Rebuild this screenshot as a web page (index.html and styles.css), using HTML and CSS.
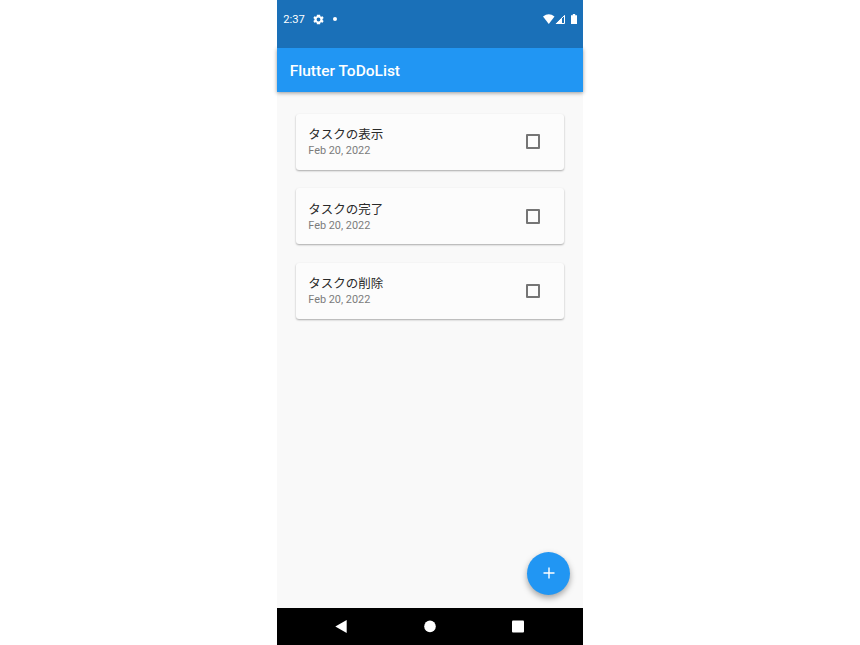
FILE: index.html
```html
<!DOCTYPE html>
<html lang="ja">
<head>
<meta charset="utf-8">
<title>Flutter ToDoList</title>
<link rel="stylesheet" href="styles.css">
</head>
<body>
<main class="phone">
  <div class="status">
    <span class="time">2:37</span>
    <svg class="gear" viewBox="0 0 24 24"><path fill="#fff" fill-rule="evenodd" d="M19.4 13a7.500 7.500 0 0 0 0-2l2.100-1.600-2-3.500-2.500 1a7.500 7.500 0 0 0-1.700-1L15 3.200H9L8.700 5.900a7.500 7.500 0 0 0-1.700 1l-2.500-1-2 3.500L4.600 11a7.500 7.500 0 0 0 0 2l-2.100 1.600 2 3.500 2.500-1a7.500 7.500 0 0 0 1.700 1l.3 2.700h6l.3-2.700a7.500 7.500 0 0 0 1.700-1l2.500 1 2-3.500zM12 15.500a3.500 3.500 0 1 1 0-7 3.500 3.500 0 0 1 0 7z"/></svg>
    <span class="dot"></span>
    <svg class="signals" viewBox="0 0 36 14"><path fill="#fff" d="M0 3.600Q5.800-1.200 11.500 3.600L5.800 11z"/><path fill="none" stroke="#fff" d="M13.700 10.500 21.500 2.400v8.100z"/><path fill="#fff" d="M12.500 11l6.500-6.500V11zM28 2.200h1.800V1h2.400v1.200H34V11h-6z"/></svg>
  </div>
  <header class="appbar">Flutter ToDoList</header>
  <section class="content">
    <article class="card"><div class="info"><h2>タスクの表示</h2><p>Feb 20, 2022</p></div><span class="check"></span></article>
    <article class="card"><div class="info"><h2>タスクの完了</h2><p>Feb 20, 2022</p></div><span class="check"></span></article>
    <article class="card"><div class="info"><h2>タスクの削除</h2><p>Feb 20, 2022</p></div><span class="check"></span></article>
    <button class="fab" aria-label="Add"><svg viewBox="0 0 12 12"><path stroke="#fff" stroke-width="1.400" d="M6 .5v11M.5 6h11"/></svg></button>
  </section>
  <nav class="nav">
    <svg viewBox="0 0 14 14"><path fill="#fff" d="M1.300 7.500 12.700 1v13z"/></svg>
    <svg viewBox="0 0 14 14"><circle cx="7" cy="7.400" r="5.800" fill="#fff"/></svg>
    <svg viewBox="0 0 14 14"><rect x="1" y="1.500" width="12" height="12" rx="1" fill="#fff"/></svg>
  </nav>
</main>
</body>
</html>
```
FILE: styles.css
```css
* { box-sizing: border-box; }
body { margin: 0; background: #fff; font-family: Roboto, "Noto Sans CJK JP", sans-serif; }
.phone { width: 305.500px; height: 645px; margin: 0 auto; display: flex; flex-direction: column; background: #f9f9f9; }
.status { height: 48.400px; flex: none; z-index: 2; background: #1a70b8; color: #fff; display: flex; align-items: flex-start; padding: 13px 4px 0 6px; }
.time { font-size: 11.200px; line-height: 14px; width: 29px; }
.gear { width: 13px; height: 13px; }
.dot { width: 4px; height: 4px; border-radius: 50%; background: #fff; margin: 4px 0 0 8.200px; }
.signals { width: 36px; height: 14px; margin-left: auto; }
.appbar { height: 43.600px; flex: none; z-index: 1; background: #2196f3; color: #fff; font-size: 15.500px; font-weight: 500; line-height: 44px; padding: 1px 0 0 12.500px; box-shadow: 0 1px 4px rgba(0,0,0,.4); }
.content { flex: 1; position: relative; padding: 21.800px 18.500px; display: flex; flex-direction: column; gap: 18.600px; }
.card { height: 56px; background: #fcfcfc; border-radius: 3px; box-shadow: 0 1px 2px rgba(0,0,0,.32); display: flex; justify-content: space-between; padding: 12.200px 24px 0 12.500px; }
h2 { margin: 0; font-size: 12.500px; line-height: 17px; font-weight: 400; color: #2a2a2a; }
p { margin: 0; font-size: 10.900px; line-height: 15px; color: #7b7b7b; }
.check { width: 14.500px; height: 14.500px; margin-top: 8.500px; border: 2px solid #757575; border-radius: 1px; }
.fab { position: absolute; right: 12.500px; bottom: 13px; width: 43.500px; height: 43.500px; border: 0; padding: 0; border-radius: 50%; background: #2196f3; box-shadow: 0 3px 6px rgba(0,0,0,.35); display: flex; align-items: center; justify-content: center; }
.fab svg { width: 12px; height: 12px; }
.nav { height: 37px; flex: none; background: #000; display: flex; align-items: center; justify-content: space-between; padding: 0 58px 1px 57px; }
.nav svg { width: 14px; height: 14px; }
```
